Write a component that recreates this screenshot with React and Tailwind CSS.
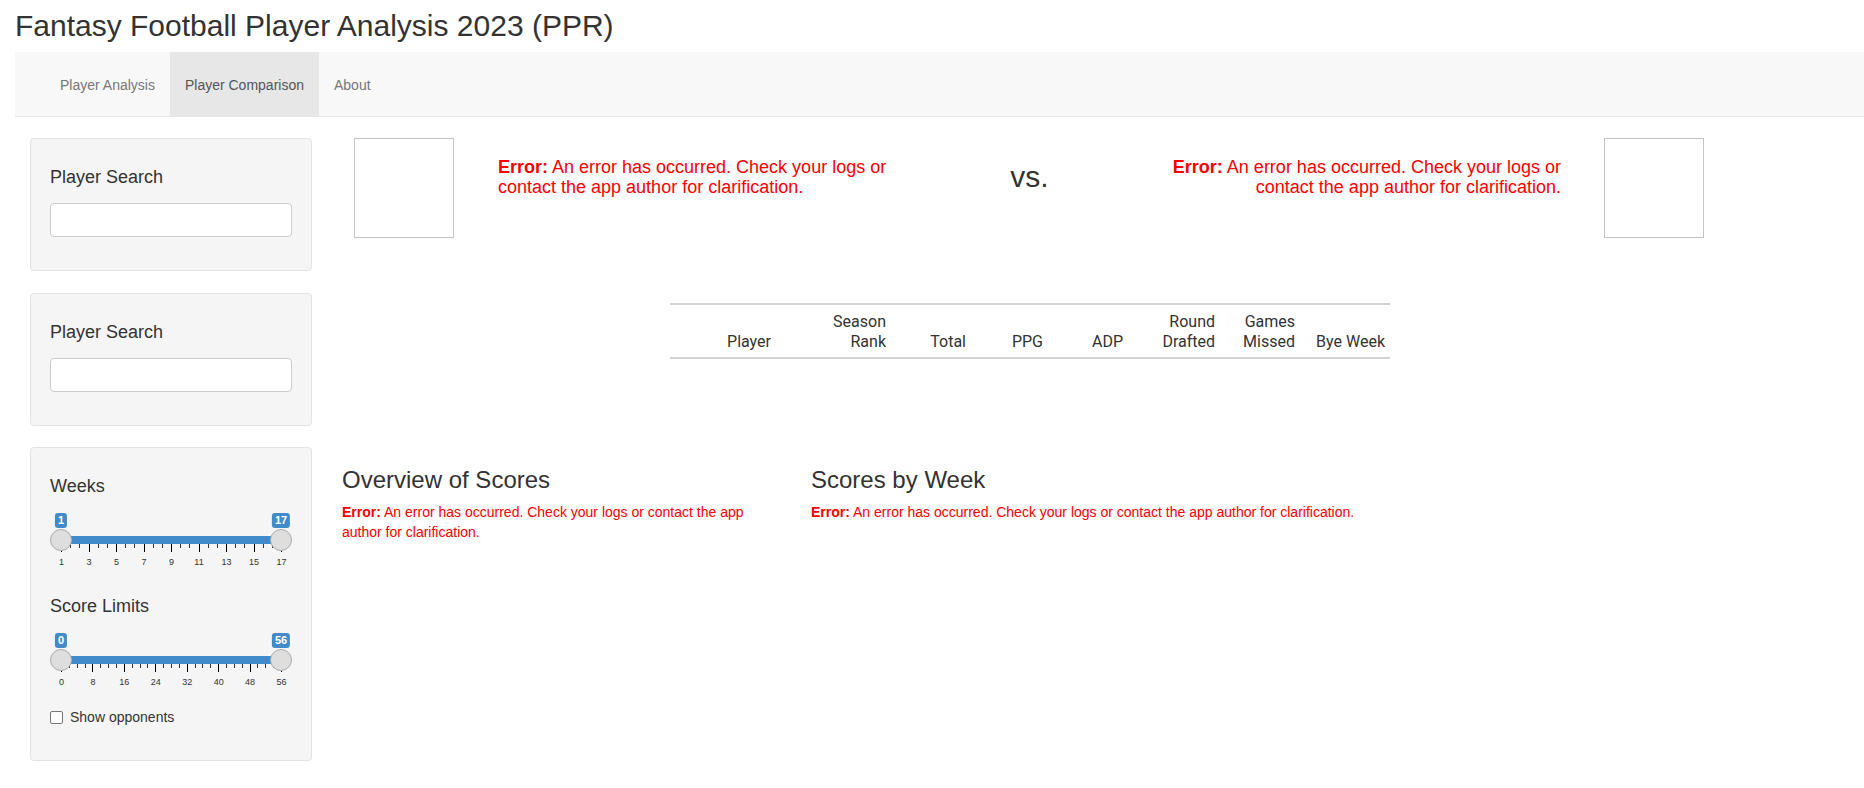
import React from 'react';

const ErrorMsg = ({ className = '' }) => (
    <div className={`text-[#ff0000] ${className}`}>
        <b>Error:</b>{' An error has occurred. Check your logs or contact the app author for clarification.'}
    </div>
);

const Slider = ({ from, to, labels, smallPerGap }) => {
    // handle centres sit 11px in from each edge, 220px of track between them
    const span = 220;
    const gaps = labels.length - 1;
    const big = labels.map((l, i) => ({ l, x: 11 + (span * i) / gaps }));
    const small = [];
    for (let i = 1; i <= gaps; i++) {
        for (let z = 1; z <= smallPerGap; z++) {
            small.push(11 + (span * (i - 1)) / gaps + (span / gaps) * (z / (smallPerGap + 1)));
        }
    }

    return (
        <div className="relative h-[67px] w-[242px] mt-[17px]">
            <div className="absolute left-[11px] top-[23px] h-[8px] w-[220px] bg-[#428bca]"></div>
            {big.map((t) => (
                <div key={'b' + t.l} className="absolute top-[31px] h-[8px] w-px bg-black" style={{ left: t.x }}></div>
            ))}
            {small.map((x, i) => (
                <div key={'s' + i} className="absolute top-[31px] h-[4px] w-px bg-[#333]" style={{ left: x }}></div>
            ))}
            {big.map((t) => (
                <span
                    key={'t' + t.l}
                    className="absolute top-[44px] -translate-x-1/2 text-[9px] leading-[10px] text-[#333]"
                    style={{ left: t.x + 0.5 }}
                >
                    {t.l}
                </span>
            ))}
            <div className="absolute left-0 top-[16px] h-[22px] w-[22px] rounded-full border border-[#ababab] bg-[#dedede]"></div>
            <div className="absolute left-[220px] top-[16px] h-[22px] w-[22px] rounded-full border border-[#ababab] bg-[#dedede]"></div>
            <span className="absolute left-[11px] top-0 -translate-x-1/2 h-[15px] px-[3px] rounded-[3px] bg-[#428bca] text-white text-[11px] leading-[15px] font-bold">
                {from}
            </span>
            <span className="absolute left-[231px] top-0 -translate-x-1/2 h-[15px] px-[3px] rounded-[3px] bg-[#428bca] text-white text-[11px] leading-[15px] font-bold">
                {to}
            </span>
        </div>
    );
};

const SearchPanel = ({ className = '' }) => (
    <div className={`bg-[#f5f5f5] border border-[#e3e3e3] rounded-[4px] px-[19px] pt-[19px] pb-[19px] ${className}`}>
        <div className="mt-[9px] text-[18px] leading-[20px]">Player Search</div>
        <input type="text" className="mt-[16px] mb-[14px] block w-[242px] h-[34px] bg-white border border-[#ccc] rounded-[4px] outline-none" />
    </div>
);

const columns = [
    { label: ['', 'Player'], w: 'w-[106px]' },
    { label: ['Season', 'Rank'], w: 'w-[115px]' },
    { label: ['', 'Total'], w: 'w-[80px]' },
    { label: ['', 'PPG'], w: 'w-[77px]' },
    { label: ['', 'ADP'], w: 'w-[80px]' },
    { label: ['Round', 'Drafted'], w: 'w-[92px]' },
    { label: ['Games', 'Missed'], w: 'w-[80px]' },
    { label: ['', 'Bye Week'], w: 'w-[90px]' },
];

export default function App() {
    return (
        <div className="min-h-screen bg-white text-[#333] font-['Liberation_Sans',Arial,sans-serif]">
            <div className="pl-[15px]">
                <h2 className="pt-[9px] mb-[10px] text-[30px] leading-[33px]">Fantasy Football Player Analysis 2023 (PPR)</h2>
                <nav className="flex h-[65px] pl-[30px] bg-[#f8f8f8] border-b border-[#e7e7e7] text-[14px]">
                    <a className="flex items-center px-[15px] pt-[2px] text-[#777]">Player Analysis</a>
                    <a className="flex items-center px-[15px] pt-[2px] bg-[#e7e7e7] text-[#555]">Player Comparison</a>
                    <a className="flex items-center px-[15px] pt-[2px] text-[#777]">About</a>
                </nav>
            </div>

            <div className="flex mt-[21px] pl-[30px]">
                {/* Sidebar */}
                <div className="flex flex-col w-[282px] shrink-0">
                    <SearchPanel />
                    <SearchPanel className="mt-[22px]" />
                    <div className="mt-[21px] bg-[#f5f5f5] border border-[#e3e3e3] rounded-[4px] px-[19px] pt-[19px] pb-[19px]">
                        <div className="mt-[9px] text-[18px] leading-[20px]">Weeks</div>
                        <Slider from="1" to="17" labels={[1, 3, 5, 7, 9, 11, 13, 15, 17]} smallPerGap={2} />
                        <div className="mt-[16px] text-[18px] leading-[20px]">Score Limits</div>
                        <Slider from="0" to="56" labels={[0, 8, 16, 24, 32, 40, 48, 56]} smallPerGap={3} />
                        <label className="flex items-center mt-[7px] mb-[14px] h-[20px] text-[14px]">
                            <span className="w-[13px] h-[13px] border border-[#767676] rounded-[2px] bg-white"></span>
                            <span className="ml-[7px]">Show opponents</span>
                        </label>
                    </div>
                </div>

                {/* Main */}
                <div className="ml-[30px] w-[1374px]">
                    <div className="flex h-[100px] px-[12px]">
                        <div className="w-[100px] h-[100px] shrink-0 border border-[#c4c4c4]"></div>
                        <ErrorMsg className="ml-[44px] mt-[19px] w-[420px] text-[18px] leading-[20px]" />
                        <div className="flex-1 flex justify-center">
                            <span className="mt-[22px] text-[30px] leading-[33px]">vs.</span>
                        </div>
                        <ErrorMsg className="mr-[43px] mt-[19px] w-[420px] text-right text-[18px] leading-[20px]" />
                        <div className="w-[100px] h-[100px] shrink-0 border border-[#c4c4c4]"></div>
                    </div>

                    <div className="flex justify-center mt-[65px] pl-[2px]">
                        <table className="table-fixed border-collapse border-t-2 border-[#d3d3d3] font-['Roboto',sans-serif] text-[16px] text-[#333]">
                            <thead>
                                <tr>
                                    {columns.map((c, i) => (
                                        <th key={i} className={`${c.w} px-[5px] pt-[7px] pb-[5px] text-right align-bottom font-normal leading-[20px] border-b-2 border-[#d3d3d3]`}>
                                            {c.label[0] && <div>{c.label[0]}</div>}
                                            <div>{c.label[1]}</div>
                                        </th>
                                    ))}
                                </tr>
                            </thead>
                        </table>
                    </div>

                    <div className="flex mt-[108px]">
                        <div className="w-[469px] pr-[30px]">
                            <h3 className="text-[24px] leading-[26.4px]">Overview of Scores</h3>
                            <ErrorMsg className="mt-[9px] text-[14px] leading-[20px]" />
                        </div>
                        <div className="flex-1">
                            <h3 className="text-[24px] leading-[26.4px]">Scores by Week</h3>
                            <ErrorMsg className="mt-[9px] text-[14px] leading-[20px]" />
                        </div>
                    </div>
                </div>
            </div>
        </div>
    );
}
